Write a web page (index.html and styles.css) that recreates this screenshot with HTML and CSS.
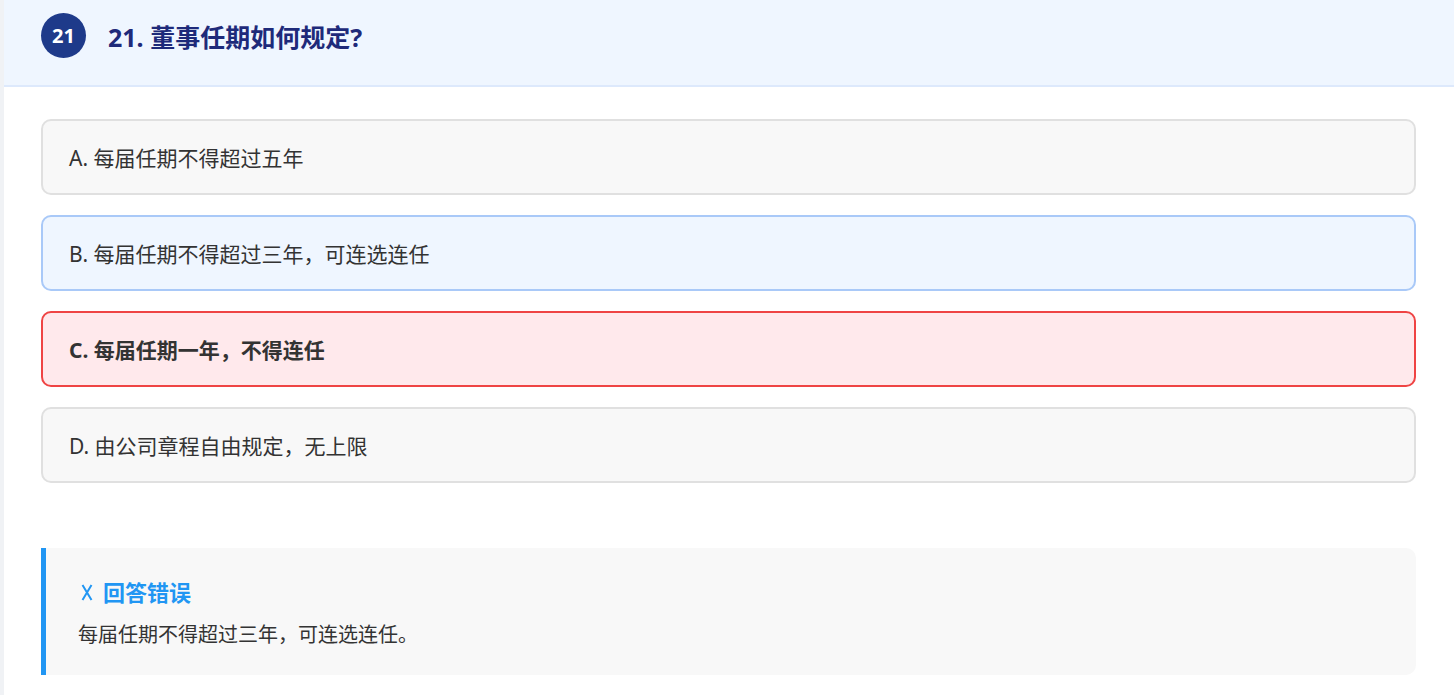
FILE: index.html
```html
<!DOCTYPE html>
<html lang="zh-CN">
<head>
<meta charset="utf-8">
<title>21. 董事任期如何规定?</title>
<link rel="stylesheet" href="styles.css">
</head>
<body>
<div class="page">
  <div class="card">
    <div class="header">
      <div class="num">21</div>
      <div class="title">21. 董事任期如何规定?</div>
    </div>
    <div class="content">
      <div class="options">
        <div class="option">A. 每届任期不得超过五年</div>
        <div class="option correct">B. 每届任期不得超过三年，可连选连任</div>
        <div class="option wrong">C. 每届任期一年，不得连任</div>
        <div class="option">D. 由公司章程自由规定，无上限</div>
      </div>
      <div class="feedback">
        <div class="fb-title">
          <svg class="fb-x" width="12" height="17" viewBox="0 0 12 17" aria-hidden="true">
            <path d="M1.5 1 L10.5 16 M10.5 1 L1.5 16" stroke="#2196f3" stroke-width="2" fill="none" stroke-linecap="butt"/>
          </svg>
          <span>回答错误</span>
        </div>
        <div class="fb-text">每届任期不得超过三年，可连选连任。</div>
      </div>
    </div>
  </div>
</div>
</body>
</html>
```
FILE: styles.css
```css
html, body {
  margin: 0;
  padding: 0;
}
body {
  background: #f0f2f5;
  font-family: "Noto Sans", "Noto Sans CJK SC", sans-serif;
  color: #333333;
}
.page {
  padding-left: 4px;
  height: 695px;
  overflow: hidden;
}
.card {
  background: #ffffff;
  height: 100%;
}
.header {
  display: flex;
  align-items: center;
  gap: 22px;
  height: 85px;
  padding: 0 37px;
  background: #eff6ff;
  border-bottom: 2px solid #dde9fc;
}
.num {
  width: 45px;
  height: 45px;
  border-radius: 50%;
  background: #1e3a8a;
  color: #ffffff;
  font-weight: 700;
  font-size: 20px;
  display: flex;
  align-items: center;
  justify-content: center;
  margin-top: -14px;
}
.title {
  font-size: 25px;
  font-weight: 700;
  color: #1e2a7a;
  margin-top: -14px;
}
.content {
  padding: 32px 38px 0 37px;
}
.options {
  display: flex;
  flex-direction: column;
  gap: 20px;
}
.option {
  box-sizing: border-box;
  height: 76px;
  display: flex;
  align-items: center;
  padding: 0 26px;
  border: 2px solid #e0e0e0;
  border-radius: 10px;
  background: #f8f8f8;
  font-size: 21px;
  color: #333333;
}
.option.correct {
  background: #eff6ff;
  border-color: #a9c9f8;
}
.option.wrong {
  background: #ffe9ec;
  border-color: #ef4444;
  font-weight: 700;
}
.feedback {
  box-sizing: border-box;
  margin-top: 65px;
  height: 127px;
  padding: 30px 32px 0 32px;
  border-left: 5px solid #2196f3;
  border-radius: 0 10px 10px 0;
  background: #f8f8f8;
}
.fb-title {
  display: flex;
  align-items: center;
  gap: 10px;
  font-size: 22px;
  font-weight: 700;
  color: #2196f3;
  line-height: 28px;
}
.fb-x {
  display: block;
  margin-left: 3px;
}
.fb-text {
  margin-top: 15px;
  font-size: 20px;
  line-height: 28px;
  color: #333333;
}
```
